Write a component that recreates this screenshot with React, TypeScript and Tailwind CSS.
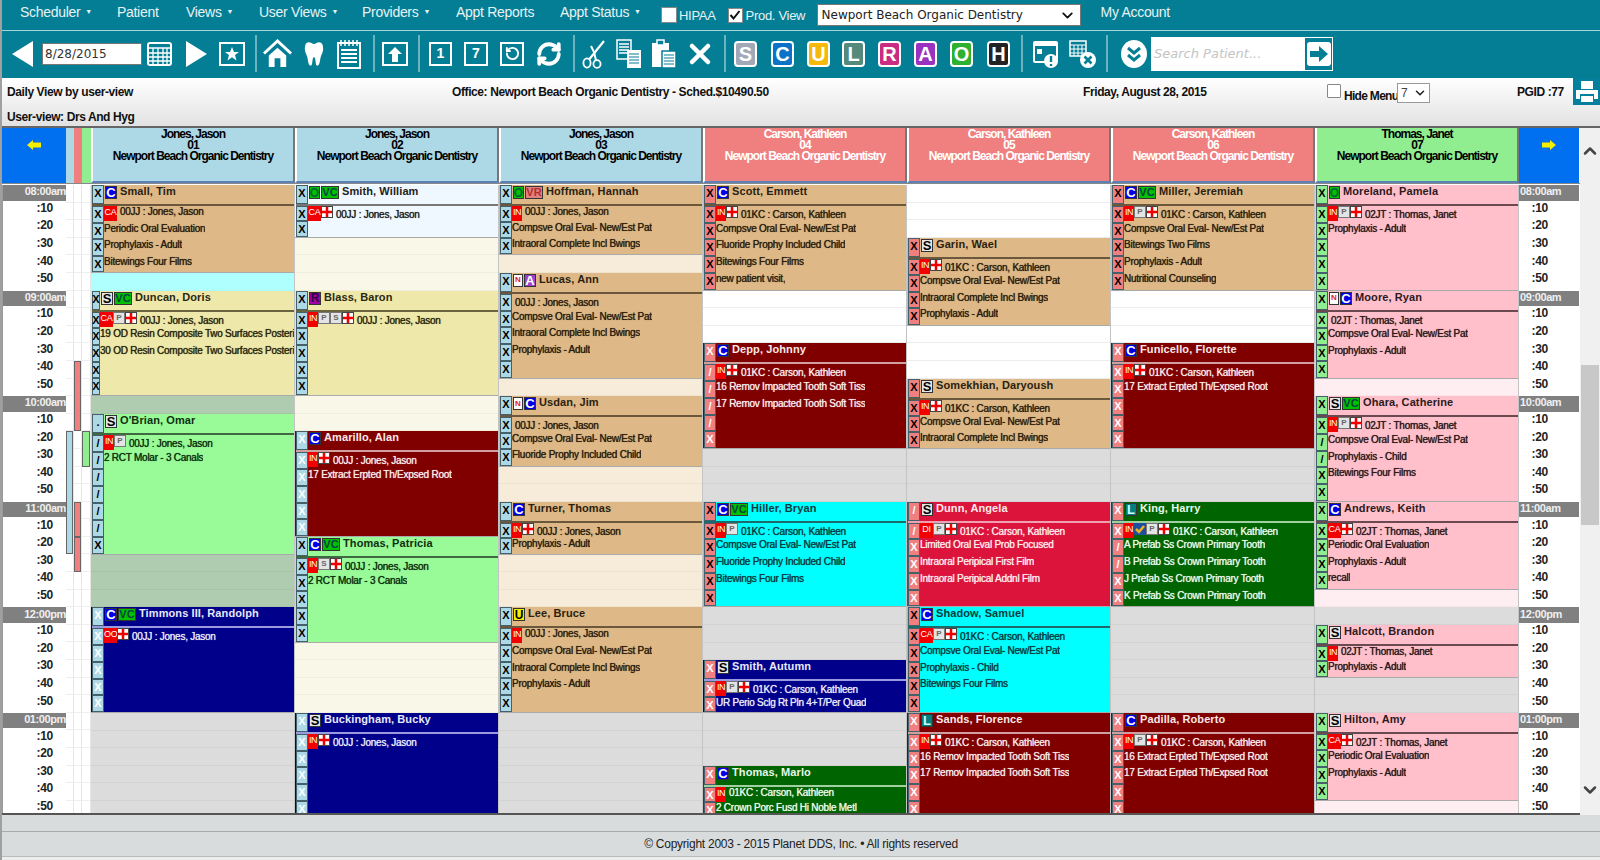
import React from 'react'
import { ChevronDown, ChevronUp, RefreshCw, RotateCcw, X } from 'lucide-react'

type Tone = { bg: string; text: string; line: string; mark: string }

const TAN: Tone = { bg: 'bg-[#deb887]', text: 'text-[#2b1f10]', line: 'border-[#6a573c]', mark: 'text-black' }
const KHAKI: Tone = { bg: 'bg-[#eee8aa]', text: 'text-[#2b2810]', line: 'border-[#6a6440]', mark: 'text-black' }
const GREEN: Tone = { bg: 'bg-[#98fb98]', text: 'text-[#10300f]', line: 'border-[#3f6a3f]', mark: 'text-black' }
const ALICE: Tone = { bg: 'bg-[#f0f8ff]', text: 'text-[#222]', line: 'border-[#777]', mark: 'text-black' }
const PINK: Tone = { bg: 'bg-[#ffc0cb]', text: 'text-[#2d1a1d]', line: 'border-[#6a4a50]', mark: 'text-black' }
const CYAN: Tone = { bg: 'bg-[#00ffff]', text: 'text-[#063c40]', line: 'border-[#1c6a6a]', mark: 'text-black' }
const NAVY: Tone = { bg: 'bg-[#00008b]', text: 'text-[#e8e8f8]', line: 'border-[#9a9ae0]', mark: 'text-white' }
const MAROON: Tone = { bg: 'bg-[#800000]', text: 'text-[#f8e8e8]', line: 'border-[#d0a0a0]', mark: 'text-white' }
const CRIMSON: Tone = { bg: 'bg-[#dc143c]', text: 'text-[#ffeaea]', line: 'border-[#f0a0b0]', mark: 'text-white' }
const FOREST: Tone = { bg: 'bg-[#006400]', text: 'text-[#e8f8e8]', line: 'border-[#a0d0a0]', mark: 'text-white' }

const BEIGE = 'bg-[#f9f7e7] border-[#f0eedc]'
const LINEN = 'bg-[#f7ebd9] border-[#efe2cf]'
const GRAY = 'bg-[#dcdcdc] border-[#d2d2d2]'
const BLANK = 'bg-white border-[#ececec]'
const SAGE = 'bg-[#b0ccb0] border-[#a8c4a8]'
const AQUA = 'bg-[#afffff] border-[#a8f8f8]'
const BLUSH = 'bg-[#ffeef1] border-[#f8e6e9]'

type Seg =
  | { n: number; free: string }
  | {
      n: number
      tone: Tone
      name: string
      badges: string[]
      chips?: string[]
      who: string
      lines?: string[]
      marks?: string
      narrow?: boolean
    }

const JJ = '00JJ : Jones, Jason'
const KC = '01KC : Carson, Kathleen'
const JT = '02JT : Thomas, Janet'
const EVAL = 'Compsve Oral Eval- New/Est Pat'
const BWINGS = 'Intraoral Complete Incl Bwings'
const PROPHY = 'Prophylaxis - Adult'
const FOUR = 'Bitewings Four Films'
const PERIODIC = 'Periodic Oral Evaluation'

const columns: { title: string; num: string; head: string; headText: string; x: string; segs: Seg[] }[] = [
  {
    title: 'Jones, Jason', num: '01', head: 'bg-[#add8e6]', headText: 'text-black', x: 'bg-[#add8e6]',
    segs: [
      { n: 5, tone: TAN, name: 'Small, Tim', badges: ['C'], chips: ['CA'], who: JJ, lines: [PERIODIC, PROPHY, FOUR] },
      { n: 1, free: AQUA },
      { n: 6, tone: KHAKI, name: 'Duncan, Doris', badges: ['S', 'VC'], chips: ['CA', 'P', '+'], who: JJ, lines: ['19 OD Resin Composite Two Surfaces Posterior', '30 OD Resin Composite Two Surfaces Posterior'], narrow: true },
      { n: 1, free: SAGE },
      { n: 8, tone: GREEN, name: "O'Brian, Omar", badges: ['S'], chips: ['IN', 'P'], who: JJ, lines: ['2 RCT Molar - 3 Canals'], marks: './/////X' },
      { n: 3, free: SAGE },
      { n: 6, tone: NAVY, name: 'Timmons III, Randolph', badges: ['C', 'VC'], chips: ['OO', '+'], who: JJ },
      { n: 6, free: GRAY },
    ],
  },
  {
    title: 'Jones, Jason', num: '02', head: 'bg-[#add8e6]', headText: 'text-black', x: 'bg-[#add8e6]',
    segs: [
      { n: 3, tone: ALICE, name: 'Smith, William', badges: ['O', 'VC'], chips: ['CA', '+'], who: JJ },
      { n: 3, free: BEIGE },
      { n: 6, tone: KHAKI, name: 'Blass, Baron', badges: ['R'], chips: ['IN', 'P', 'N', '+'], who: JJ },
      { n: 2, free: BEIGE },
      { n: 6, tone: MAROON, name: 'Amarillo, Alan', badges: ['C'], chips: ['IN', '+'], who: JJ, lines: ['17 Extract Erpted Th/Expsed Root'] },
      { n: 6, tone: GREEN, name: 'Thomas, Patricia', badges: ['C', 'VC'], chips: ['IN', 'N', '+'], who: JJ, lines: ['2 RCT Molar - 3 Canals'] },
      { n: 4, free: BEIGE },
      { n: 6, tone: NAVY, name: 'Buckingham, Bucky', badges: ['S'], chips: ['IN', '+'], who: JJ },
    ],
  },
  {
    title: 'Jones, Jason', num: '03', head: 'bg-[#add8e6]', headText: 'text-black', x: 'bg-[#add8e6]',
    segs: [
      { n: 4, tone: TAN, name: 'Hoffman, Hannah', badges: ['O', 'VR'], chips: ['IN'], who: JJ, lines: [EVAL, BWINGS] },
      { n: 1, free: LINEN },
      { n: 6, tone: TAN, name: 'Lucas, Ann', badges: ['N', 'A'], who: JJ, lines: [EVAL, BWINGS, PROPHY] },
      { n: 1, free: LINEN },
      { n: 4, tone: TAN, name: 'Usdan, Jim', badges: ['N', 'C'], who: JJ, lines: [EVAL, 'Fluoride Prophy Included Child'] },
      { n: 2, free: LINEN },
      { n: 3, tone: TAN, name: 'Turner, Thomas', badges: ['C'], chips: ['IN', '+'], who: JJ, lines: [PROPHY] },
      { n: 3, free: LINEN },
      { n: 6, tone: TAN, name: 'Lee, Bruce', badges: ['U'], chips: ['IN'], who: JJ, lines: [EVAL, BWINGS, PROPHY] },
      { n: 6, free: GRAY },
    ],
  },
  {
    title: 'Carson, Kathleen', num: '04', head: 'bg-[#f08080]', headText: 'text-white', x: 'bg-[#f08080]',
    segs: [
      { n: 6, tone: TAN, name: 'Scott, Emmett', badges: ['C'], chips: ['IN', '+'], who: KC, lines: [EVAL, 'Fluoride Prophy Included Child', FOUR, 'new patient visit,'] },
      { n: 3, free: BLANK },
      { n: 6, tone: MAROON, name: 'Depp, Johnny', badges: ['C'], chips: ['IN', '+'], who: KC, lines: ['16 Remov Impacted Tooth Soft Tiss', '17 Remov Impacted Tooth Soft Tiss'], marks: 'X////X' },
      { n: 3, free: GRAY },
      { n: 6, tone: CYAN, name: 'Hiller, Bryan', badges: ['C', 'VC'], chips: ['IN', 'P'], who: KC, lines: [EVAL, 'Fluoride Prophy Included Child', FOUR] },
      { n: 3, free: GRAY },
      { n: 3, tone: NAVY, name: 'Smith, Autumn', badges: ['S'], chips: ['IN', 'P', '+'], who: KC, lines: ['UR Perio Sclg Rt Pln 4+T/Per Quad'] },
      { n: 3, free: GRAY },
      { n: 3, tone: FOREST, name: 'Thomas, Marlo', badges: ['C'], chips: ['IN'], who: KC, lines: ['2 Crown Porc Fusd Hi Noble Metl'] },
    ],
  },
  {
    title: 'Carson, Kathleen', num: '05', head: 'bg-[#f08080]', headText: 'text-white', x: 'bg-[#f08080]',
    segs: [
      { n: 3, free: BLANK },
      { n: 5, tone: TAN, name: 'Garin, Wael', badges: ['S'], chips: ['IN', '+'], who: KC, lines: [EVAL, BWINGS, PROPHY] },
      { n: 3, free: BLANK },
      { n: 4, tone: TAN, name: 'Somekhian, Daryoush', badges: ['S'], chips: ['IN', '+'], who: KC, lines: [EVAL, BWINGS] },
      { n: 3, free: GRAY },
      { n: 6, tone: CRIMSON, name: 'Dunn, Angela', badges: ['S'], chips: ['DI', 'P', '+'], who: KC, lines: ['Limited Oral Eval Prob Focused', 'Intraoral Peripical First Film', 'Intraoral Peripical Addnl Film'], marks: '//XXXX' },
      { n: 6, tone: CYAN, name: 'Shadow, Samuel', badges: ['C'], chips: ['CA', 'P', '+'], who: KC, lines: [EVAL, 'Prophylaxis - Child', FOUR] },
      { n: 6, tone: MAROON, name: 'Sands, Florence', badges: ['L'], chips: ['IN', '+'], who: KC, lines: ['16 Remov Impacted Tooth Soft Tiss', '17 Remov Impacted Tooth Soft Tiss'] },
    ],
  },
  {
    title: 'Carson, Kathleen', num: '06', head: 'bg-[#f08080]', headText: 'text-white', x: 'bg-[#f08080]',
    segs: [
      { n: 6, tone: TAN, name: 'Miller, Jeremiah', badges: ['C', 'VC'], chips: ['IN', 'P', '+'], who: KC, lines: [EVAL, 'Bitewings Two Films', PROPHY, 'Nutritional Counseling'] },
      { n: 3, free: BLANK },
      { n: 6, tone: MAROON, name: 'Funicello, Florette', badges: ['C'], chips: ['IN', '+'], who: KC, lines: ['17 Extract Erpted Th/Expsed Root'] },
      { n: 3, free: GRAY },
      { n: 6, tone: FOREST, name: 'King, Harry', badges: ['L'], chips: ['IN', 'V', 'P', '+'], who: KC, lines: ['A Prefab Ss Crown Primary Tooth', 'B Prefab Ss Crown Primary Tooth', 'J Prefab Ss Crown Primary Tooth', 'K Prefab Ss Crown Primary Tooth'], marks: 'XX//XX' },
      { n: 6, free: GRAY },
      { n: 6, tone: MAROON, name: 'Padilla, Roberto', badges: ['C'], chips: ['IN', 'P', '+'], who: KC, lines: ['16 Extract Erpted Th/Expsed Root', '17 Extract Erpted Th/Expsed Root'] },
    ],
  },
  {
    title: 'Thomas, Janet', num: '07', head: 'bg-[#90ee90]', headText: 'text-black', x: 'bg-[#90ee90]',
    segs: [
      { n: 6, tone: PINK, name: 'Moreland, Pamela', badges: ['O'], chips: ['IN', 'P', '+'], who: JT, lines: [PROPHY] },
      { n: 5, tone: PINK, name: 'Moore, Ryan', badges: ['N', 'C'], who: JT, lines: [EVAL, PROPHY] },
      { n: 1, free: BLUSH },
      { n: 6, tone: PINK, name: 'Ohara, Catherine', badges: ['S', 'VC'], chips: ['IN', 'P', '+'], who: JT, lines: [EVAL, 'Prophylaxis - Child', FOUR], marks: 'XX//XX' },
      { n: 5, tone: PINK, name: 'Andrews, Keith', badges: ['C'], chips: ['CA', '+'], who: JT, lines: [PERIODIC, PROPHY, 'recall'] },
      { n: 1, free: BLUSH },
      { n: 1, free: GRAY },
      { n: 3, tone: PINK, name: 'Halcott, Brandon', badges: ['S'], chips: ['IN'], who: JT, lines: [PROPHY] },
      { n: 2, free: GRAY },
      { n: 5, tone: PINK, name: 'Hilton, Amy', badges: ['S'], chips: ['CA', '+'], who: JT, lines: [PERIODIC, PROPHY] },
      { n: 1, free: BLUSH },
    ],
  },
]

const badgeClass: Record<string, string> = {
  C: 'w-[12px] bg-[#0000e6] text-white text-[13px]',
  S: 'w-[12px] bg-[#e6e6e6] text-black text-[13px]',
  O: 'w-[11px] bg-[#00c000] text-[#063] text-[12px]',
  R: 'w-[12px] bg-[#a000a8] text-[#300040] text-[12px]',
  A: 'w-[12px] bg-[#a040d0] text-white text-[13px]',
  U: 'w-[12px] bg-[#f0f000] text-black text-[12px]',
  L: 'w-[12px] bg-[#008080] text-[#cff] text-[13px]',
  N: 'w-[10px] bg-white text-[#e02020] text-[8px]',
  VC: 'w-[18px] bg-[#00c000] text-[#044] text-[11px]',
  VR: 'w-[18px] bg-[#e08080] text-[#b03030] text-[11px]',
}

function Badge({ k }: { k: string }) {
  return (
    <span className={`flex h-[13px] shrink-0 items-center justify-center border border-[#333] font-bold leading-none ${badgeClass[k]}`}>
      {k}
    </span>
  )
}

function Chip({ k }: { k: string }) {
  if (k === '+') {
    return (
      <svg viewBox="0 0 12 12" className="h-[12px] w-[12px] shrink-0 self-start border border-[#444]">
        <rect width="12" height="12" fill="#fff" />
        <path d="M6 0V12M0 6H12" stroke="#f00000" strokeWidth="3" />
      </svg>
    )
  }
  if (k === 'P' || k === 'N') {
    return (
      <span className="flex h-[12px] w-[12px] shrink-0 items-center justify-center self-start border border-[#777] bg-[#e4e4e4] text-[8px] font-bold leading-none text-[#666]">
        {k === 'P' ? 'P' : 'S'}
      </span>
    )
  }
  if (k === 'V') {
    return (
      <svg viewBox="0 0 12 12" className="h-[12px] w-[12px] shrink-0 self-start">
        <rect width="12" height="12" fill="#1c4fa0" />
        <path d="M2 6L5 9L10 3" stroke="#f0b020" strokeWidth="2.5" fill="none" />
      </svg>
    )
  }
  return (
    <span className={`h-[15px] shrink-0 self-start bg-[#f00000] pt-[1px] text-center text-[9px] leading-[10px] text-white ${k === 'IN' ? 'w-[10px] tracking-[-0.5px]' : 'w-[13px] tracking-[-0.3px]'}`}>
      {k}
    </span>
  )
}

function XBox({ mark, tone, bg, narrow }: { mark: string; tone: Tone; bg: string; narrow?: boolean }) {
  return (
    <span className={`flex h-full shrink-0 justify-center border border-[#44606a] text-[11px] font-bold leading-[14px] ${narrow ? 'w-[8px]' : 'w-[12px]'} ${bg} ${tone.mark}`}>
      {mark}
    </span>
  )
}

function Appointment({ seg, xBg }: { seg: Extract<Seg, { tone: Tone }>; xBg: string }) {
  const { tone } = seg
  const lines = seg.lines ?? []
  const marks = seg.marks ?? 'XXXXXXXX'
  const rest = Array.from({ length: seg.n - 2 }, (_, i) => lines[i] ?? '')
  const chips = seg.chips ?? []
  return (
    <div className={`flex shrink-0 flex-col overflow-hidden border-b border-[#aaa] pl-[1px] ${tone.bg} ${tone.text}`} style={{ height: seg.n * 17.6 }}>
      <div className={`flex h-[21px] shrink-0 items-stretch border-b-2 ${tone.line}`}>
        <XBox mark={marks[0]} tone={tone} bg={xBg} narrow={seg.narrow} />
        <div className="flex h-[15px] items-center gap-[1px] pl-[1px]">
          {seg.badges.map((b) => (
            <Badge key={b} k={b} />
          ))}
        </div>
        <span className="ml-[3px] h-[15px] whitespace-nowrap text-[11px] font-bold leading-[13px] tracking-[0.1px]">{seg.name}</span>
      </div>
      <div className="flex min-h-0 flex-1 items-stretch">
        <XBox mark={marks[1]} tone={tone} bg={xBg} narrow={seg.narrow} />
        {chips.map((c, i) => (
          <Chip key={i} k={c} />
        ))}
        <span className={`ml-[3px] whitespace-nowrap text-[10px] tracking-[-0.25px] [text-shadow:0_0_0.7px_currentColor] ${chips.length === 1 ? 'leading-[12px]' : 'pt-[2px] leading-[13px]'}`}>{seg.who}</span>
      </div>
      {rest.map((line, i) => (
        <div key={i} className="flex min-h-0 flex-1 items-stretch">
          <XBox mark={marks[i + 2] ?? 'X'} tone={tone} bg={xBg} narrow={seg.narrow} />
          <span className="min-w-0 overflow-hidden whitespace-nowrap text-[10px] leading-[11px] tracking-[-0.25px] [text-shadow:0_0_0.7px_currentColor]">{line}</span>
        </div>
      ))}
    </div>
  )
}

function FreeBlock({ n, cls }: { n: number; cls: string }) {
  return (
    <div className="flex shrink-0 flex-col">
      {Array.from({ length: n }, (_, i) => (
        <div key={i} className={`h-[17.6px] shrink-0 border-b ${cls}`} />
      ))}
    </div>
  )
}

const minutes = [':10', ':20', ':30', ':40', ':50']
const hours = ['08:00am', '09:00am', '10:00am', '11:00am', '12:00pm', '01:00pm']

function TimeColumn({ side }: { side: 'left' | 'right' }) {
  return (
    <div className={`flex shrink-0 flex-col ${side === 'left' ? 'w-[64px] border-l border-[#999]' : 'w-[60px]'}`}>
      {hours.map((h) => (
        <React.Fragment key={h}>
          <div className={`flex h-[17.6px] shrink-0 items-center border-b-[2px] border-white bg-[#808080] pb-[2px] text-[11px] font-bold leading-none tracking-[-0.4px] text-[#f0f0f0] ${side === 'left' ? 'justify-end' : 'justify-start pl-[1px]'}`}>
            {h}
          </div>
          {minutes.map((m) => (
            <div key={m} className={`flex h-[17.6px] shrink-0 items-center justify-end bg-white pb-[7px] text-[12px] font-bold leading-none tracking-[-0.3px] text-[#222] ${side === 'left' ? 'pr-[13px]' : 'pr-[31px]'}`}>
              {m}
            </div>
          ))}
        </React.Fragment>
      ))}
    </div>
  )
}

function MiniColumn({ bars, color, w }: { bars: [number, number][]; color: string; w: string }) {
  return (
    <div className={`flex shrink-0 flex-col border-r border-[#e6e6e6] ${w}`}>
      {Array.from({ length: 36 }, (_, i) => {
        const bar = bars.find(([a, b]) => i >= a && i < b)
        return bar ? (
          <div key={i} className={`h-[17.6px] shrink-0 border-x border-[#666] ${color} ${i === bar[0] ? 'border-t' : ''} ${i === bar[1] - 1 ? 'border-b' : ''}`} />
        ) : (
          <div key={i} className="h-[17.6px] shrink-0 border-b border-[#efefef] bg-white" />
        )
      })}
    </div>
  )
}

function BoxIcon({ children, w }: { children: React.ReactNode; w: string }) {
  return (
    <div className={`flex h-[24px] shrink-0 items-center justify-center border-2 border-white ${w}`}>{children}</div>
  )
}

const Sep = ({ ml }: { ml: string }) => <div className={`h-[37px] w-[2px] shrink-0 bg-[#6cb2bf] ${ml}`} />

const LetterBox = ({ l, cls, ml }: { l: string; cls: string; ml: string }) => (
  <div className={`flex h-[26px] w-[23px] shrink-0 items-center justify-center rounded-[4px] border-2 border-white text-[20px] font-bold leading-none text-white ${cls} ${ml}`}>
    {l}
  </div>
)

function Toolbar() {
  return (
    <div className="flex h-[47px] items-center bg-[#047e94] pb-[2px]">
      <svg viewBox="0 0 21 26" className="ml-[10px] h-[26px] w-[21px] shrink-0"><path d="M21 0V26L0 13Z" fill="#fff" /></svg>
      <div className="ml-[9px] h-[22px] w-[100px] shrink-0 border border-[#777] bg-white pl-[2px] font-['DejaVu_Sans',sans-serif] text-[12px] leading-[20px] text-[#333]">8/28/2015</div>
      <svg viewBox="0 0 25 24" className="ml-[5px] h-[24px] w-[25px] shrink-0" fill="none">
        <rect x="1" y="1" width="23" height="22" rx="2" stroke="#fff" strokeWidth="2" />
        <path d="M1 6H24M6 6V23M11 6V23M16 6V23M20 6V23M1 11H24M1 15H24M1 19H24" stroke="#fff" strokeWidth="1.3" />
      </svg>
      <svg viewBox="0 0 21 26" className="ml-[14px] h-[26px] w-[21px] shrink-0"><path d="M0 0V26L21 13Z" fill="#fff" /></svg>
      <div className="ml-[12px]">
        <BoxIcon w="w-[26px]">
          <svg viewBox="0 0 14 14" className="h-[14px] w-[14px]"><path d="M7 0L9 5H14L10 8L11.5 13.5L7 10.2L2.5 13.5L4 8L0 5H5Z" fill="#fff" /></svg>
        </BoxIcon>
      </div>
      <Sep ml="ml-[10px]" />
      <svg viewBox="0 0 30 30" className="ml-[6px] h-[29px] w-[29px] shrink-0">
        <path d="M1 15L15 2L29 15" stroke="#fff" strokeWidth="3" fill="none" />
        <path d="M6 17L15 9L24 17V29H18V20H12V29H6Z" fill="#fff" />
      </svg>
      <svg viewBox="0 0 24 30" className="ml-[12px] h-[30px] w-[20px] shrink-0">
        <path d="M6 1C2 1 1 5 1 9C1 13 3 15 4 19C5 23 5 29 8 29C10 29 10 24 10.5 21C11 18 13 18 13.5 21C14 24 14 29 16 29C19 29 19 23 20 19C21 15 23 13 23 9C23 5 22 1 18 1C16 1 14 3 12 3C10 3 8 1 6 1Z" fill="#fff" />
      </svg>
      <svg viewBox="0 0 24 30" className="ml-[13px] h-[30px] w-[24px] shrink-0" fill="none">
        <rect x="1" y="4" width="22" height="25" stroke="#fff" strokeWidth="2" />
        <path d="M4 1V7M8 1V7M12 1V7M16 1V7M20 1V7" stroke="#fff" strokeWidth="1.5" />
        <path d="M4 11H20M4 15H20M4 19H20M4 23H20" stroke="#fff" strokeWidth="2" />
      </svg>
      <Sep ml="ml-[12px]" />
      <div className="ml-[7px]">
        <BoxIcon w="w-[26px]">
          <svg viewBox="0 0 16 16" className="h-[18px] w-[16px]"><path d="M8 1L15 8H11V16H5V8H1Z" fill="#fff" /></svg>
        </BoxIcon>
      </div>
      <Sep ml="ml-[10px]" />
      <div className="ml-[9px]"><BoxIcon w="w-[23px]"><span className="text-[14px] font-bold text-white">1</span></BoxIcon></div>
      <div className="ml-[12px]"><BoxIcon w="w-[24px]"><span className="text-[14px] font-bold text-white">7</span></BoxIcon></div>
      <div className="ml-[12px]"><BoxIcon w="w-[24px]"><RotateCcw size={15} strokeWidth={3} className="text-white" /></BoxIcon></div>
      <RefreshCw size={26} strokeWidth={3.5} className="ml-[12px] shrink-0 text-white" />
      <Sep ml="ml-[11px]" />
      <svg viewBox="0 0 24 30" className="ml-[7px] h-[30px] w-[24px] shrink-0" fill="none" stroke="#fff">
        <ellipse cx="5" cy="24" rx="3.6" ry="4.6" strokeWidth="1.8" />
        <ellipse cx="15" cy="25" rx="3.6" ry="3.8" strokeWidth="1.8" />
        <path d="M7.5 20L22 2" strokeWidth="2.2" />
        <path d="M14 21.5L12 13L9 7" strokeWidth="2" />
      </svg>
      <svg viewBox="0 0 26 30" className="ml-[10px] h-[30px] w-[26px] shrink-0" fill="none">
        <rect x="1" y="1" width="14" height="19" fill="#047e94" stroke="#fff" strokeWidth="1.5" />
        <path d="M3 5H13M3 8H13M3 11H13M3 14H13" stroke="#fff" strokeWidth="1.3" />
        <rect x="11" y="11" width="14" height="18" fill="#fff" />
        <path d="M13 15H23M13 18H23M13 21H23M13 24H23" stroke="#047e94" strokeWidth="1.2" />
      </svg>
      <svg viewBox="0 0 26 30" className="ml-[9px] h-[30px] w-[26px] shrink-0" fill="none">
        <rect x="1" y="4" width="17" height="24" fill="#fff" />
        <rect x="6" y="1" width="7" height="5" fill="#047e94" stroke="#fff" strokeWidth="1.5" />
        <rect x="11" y="12" width="14" height="17" fill="#fff" stroke="#047e94" strokeWidth="1.5" />
        <path d="M13 16H23M13 19H23M13 22H23M13 25H23" stroke="#047e94" strokeWidth="1.2" />
      </svg>
      <X size={32} strokeWidth={3.4} className="ml-[7px] shrink-0 text-white" />
      <Sep ml="ml-[8px]" />
      <LetterBox l="S" cls="bg-[#a2a8b8]" ml="ml-[8px]" />
      <LetterBox l="C" cls="bg-[#0c72c8]" ml="ml-[14px]" />
      <LetterBox l="U" cls="bg-[#f5b90a]" ml="ml-[13px]" />
      <LetterBox l="L" cls="bg-[#55897c]" ml="ml-[12px]" />
      <LetterBox l="R" cls="bg-[#c92c80]" ml="ml-[13px]" />
      <LetterBox l="A" cls="bg-[#9a32c0]" ml="ml-[13px]" />
      <LetterBox l="O" cls="bg-[#2fb030]" ml="ml-[13px]" />
      <LetterBox l="H" cls="bg-[#222]" ml="ml-[14px]" />
      <Sep ml="ml-[11px]" />
      <svg viewBox="0 0 26 30" className="ml-[10px] h-[30px] w-[26px] shrink-0" fill="none">
        <rect x="1" y="3" width="23" height="20" rx="1" stroke="#fff" strokeWidth="2" />
        <rect x="1" y="3" width="23" height="4" fill="#fff" />
        <rect x="4" y="10" width="5" height="5" fill="#fff" />
        <circle cx="18" cy="22" r="7" fill="#fff" />
        <path d="M18 17V23M18 25V27" stroke="#047e94" strokeWidth="2.4" />
      </svg>
      <svg viewBox="0 0 27 30" className="ml-[10px] h-[30px] w-[27px] shrink-0" fill="none">
        <rect x="1" y="2" width="16" height="15" stroke="#fff" strokeWidth="1.5" />
        <path d="M1 6H17M5 6V17M9 6V17M13 6V17M1 10H17M1 14H17" stroke="#fff" strokeWidth="1" />
        <circle cx="19" cy="21" r="8" fill="#fff" />
        <path d="M15.5 17.5L22.5 24.5M22.5 17.5L15.5 24.5" stroke="#047e94" strokeWidth="2.6" />
      </svg>
      <Sep ml="ml-[10px]" />
      <svg viewBox="0 0 26 28" className="ml-[13px] h-[28px] w-[26px] shrink-0" fill="none">
        <ellipse cx="13" cy="14" rx="13" ry="14" fill="#fff" />
        <path d="M7 8L13 13L19 8M7 15L13 20L19 15" stroke="#047e94" strokeWidth="3" />
      </svg>
      <div className="ml-[4px] flex h-[34px] w-[182px] shrink-0 items-center border border-white bg-white">
        <span className="flex-1 pl-[2px] font-['DejaVu_Sans',sans-serif] text-[13px] italic text-[#c4c4c4]">Search Patient...</span>
        <div className="flex h-full w-[27px] items-center justify-center bg-[#047e94]">
          <svg viewBox="0 0 24 24" className="h-[24px] w-[24px]"><rect x="0" y="0" width="24" height="24" rx="3" fill="#fff" /><path d="M3 9H12V4L21 12L12 20V15H3Z" fill="#047e94" /></svg>
        </div>
      </div>
    </div>
  )
}

const menu = [
  { label: 'Scheduler', caret: true, w: 'w-[97px]' },
  { label: 'Patient', w: 'w-[69px]' },
  { label: 'Views', caret: true, w: 'w-[73px]' },
  { label: 'User Views', caret: true, w: 'w-[103px]' },
  { label: 'Providers', caret: true, w: 'w-[94px]' },
  { label: 'Appt Reports', w: 'w-[104px]' },
  { label: 'Appt Status', caret: true, w: 'w-[101px]' },
]

function MenuBar() {
  return (
    <div className="flex h-[31px] items-center border-b border-[#a8d2da] bg-[#047e94] pl-[18px] text-[14px] tracking-[-0.3px] text-[#e6f2f4]">
      {menu.map((m) => (
        <div key={m.label} className={`flex shrink-0 items-center ${m.w} pb-[6px]`}>
          {m.label}
          {m.caret && <span className="ml-[5px] mt-[1px] text-[7px]">▼</span>}
        </div>
      ))}
      <div className="h-[16px] w-[16px] shrink-0 border border-[#888] bg-white" />
      <span className="ml-[2px] shrink-0 pt-[2px] text-[13px]">HIPAA</span>
      <div className="ml-[12px] flex h-[15px] w-[15px] shrink-0 items-center justify-center border border-[#888] bg-white">
        <svg viewBox="0 0 12 12" className="h-[12px] w-[12px]"><path d="M1.5 6L4.5 9.5L10.5 2" stroke="#111" strokeWidth="2" fill="none" /></svg>
      </div>
      <span className="ml-[3px] w-[68px] shrink-0 pt-[2px] text-[13px]">Prod. View</span>
      <div className="ml-[3px] flex h-[22px] w-[264px] shrink-0 items-center justify-between border border-[#777] bg-white pl-[4px] pr-[4px] font-['DejaVu_Sans',sans-serif] text-[12px] tracking-normal text-[#222]">
        Newport Beach Organic Dentistry
        <ChevronDown size={17} strokeWidth={2.6} className="text-[#111]" />
      </div>
      <span className="ml-[20px] pb-[6px]">My Account</span>
    </div>
  )
}

function InfoBar() {
  return (
    <div className="flex h-[48px] flex-col bg-gradient-to-b from-white to-[#e2e2e2] text-[12px] font-bold tracking-[-0.4px] text-[#111]">
      <div className="flex h-[25px] shrink-0 items-start">
        <span className="ml-[5px] mt-[5px] w-[445px] shrink-0">Daily View by user-view</span>
        <span className="mt-[5px] w-[631px] shrink-0">Office: Newport Beach Organic Dentistry - Sched.$10490.50</span>
        <span className="mt-[5px] w-[244px] shrink-0">Friday, August 28, 2015</span>
        <div className="mt-[6px] h-[14px] w-[14px] shrink-0 rounded-[1px] border border-[#888] bg-white" />
        <span className="ml-[3px] mt-[9px] w-[53px] shrink-0 whitespace-nowrap tracking-[-0.7px]">Hide Menu</span>
        <div className="mt-[5px] flex h-[20px] w-[33px] shrink-0 items-center justify-between border border-[#999] bg-white pl-[3px] pr-[2px] font-normal text-[#444]">
          7
          <ChevronDown size={14} strokeWidth={2.6} className="text-[#222]" />
        </div>
        <span className="ml-[87px] mt-[5px] w-[56px] shrink-0">PGID :77</span>
        <div className="flex h-[27px] w-[27px] shrink-0 items-center justify-center bg-[#04809c]">
          <svg viewBox="0 0 24 24" className="h-[24px] w-[24px]">
            <rect x="6" y="1" width="12" height="8" fill="#fff" />
            <path d="M1 10H23V19H19V14H5V19H1Z" fill="#fff" />
            <rect x="6" y="16" width="12" height="6" fill="#fff" />
          </svg>
        </div>
      </div>
      <span className="ml-[5px] mt-[5px]">User-view: Drs And Hyg</span>
    </div>
  )
}

function HeadArrow({ dir }: { dir: 'left' | 'right' }) {
  return (
    <svg viewBox="0 0 14 10" className={`h-[10px] w-[14px] ${dir === 'right' ? '' : 'rotate-180'}`}>
      <path d="M0 2.5H8V0L14 5L8 10V7.5H0Z" fill="#f6f000" />
    </svg>
  )
}

export default function App() {
  return (
    <div className="h-[860px] w-[1600px] overflow-hidden border-l-2 border-[#a0a0a0] bg-[#eceeee] font-['Liberation_Sans',Arial,sans-serif]">
      <MenuBar />
      <Toolbar />
      <InfoBar />

      <div className="flex h-[689px] border-t-2 border-[#666]">
        <div className="flex w-[1578px] shrink-0 flex-col border-b-2 border-[#555]">
          <div className="flex h-[56px] shrink-0 border-b border-[#888] bg-white">
            <div className="flex w-[64px] shrink-0 justify-center bg-[#006ff0] pt-[12px]">
              <HeadArrow dir="left" />
            </div>
            <div className="w-[8px] shrink-0 bg-[#add8e6]" />
            <div className="w-[8px] shrink-0 bg-[#f08080]" />
            <div className="w-[9px] shrink-0 bg-[#90ee90]" />
            {columns.map((c) => (
              <div key={c.num} className={`flex w-[204px] shrink-0 flex-col items-center border-b-2 border-l-2 border-r-2 border-b-[#5b82b8] border-l-white border-r-[#777] text-[12px] font-bold leading-[11px] tracking-[-1px] ${c.head} ${c.headText}`}>
                <span className="mt-[1px]">{c.title}</span>
                <span>{c.num}</span>
                <span>Newport Beach Organic Dentistry</span>
              </div>
            ))}
            <div className="flex w-[60px] shrink-0 justify-center bg-[#006ff0] pt-[12px]">
              <HeadArrow dir="right" />
            </div>
          </div>
          <div className="flex min-h-0 flex-1 overflow-hidden bg-white pt-[1px]">
            <TimeColumn side="left" />
            <MiniColumn bars={[[14, 21]]} color="bg-[#add8e6]" w="w-[8px]" />
            <MiniColumn bars={[[10, 14], [18, 20], [20, 22]]} color="bg-[#f08080]" w="w-[8px]" />
            <MiniColumn bars={[[14, 16]]} color="bg-[#90ee90]" w="w-[9px]" />
            {columns.map((c) => (
              <div key={c.num} className="flex w-[204px] shrink-0 flex-col border-r border-[#c4c4c4]">
                {c.segs.map((s, i) =>
                  'free' in s ? (
                    <FreeBlock key={i} n={s.n} cls={s.free} />
                  ) : (
                    <Appointment key={i} seg={s} xBg={c.x} />
                  ),
                )}
              </div>
            ))}
            <TimeColumn side="right" />
          </div>
        </div>
        <div className="flex w-[20px] shrink-0 flex-col items-center bg-[#f0f0f0]">
          <ChevronUp size={20} strokeWidth={3} className="mt-[13px] shrink-0 text-[#444]" />
          <div className="mt-[204px] h-[160px] w-[18px] shrink-0 bg-[#c8c8c8]" />
          <ChevronDown size={20} strokeWidth={3} className="mt-[255px] shrink-0 text-[#444]" />
        </div>
      </div>

      <div className="h-[17px] border-b border-[#aaa] bg-[#d8dcdd]" />
      <div className="flex h-[25px] items-center justify-center border-b border-[#bbb] bg-[#d8dcdd] text-[12px] tracking-[-0.25px] text-[#222]">
        © Copyright 2003 - 2015 Planet DDS, Inc. • All rights reserved
      </div>
    </div>
  )
}
